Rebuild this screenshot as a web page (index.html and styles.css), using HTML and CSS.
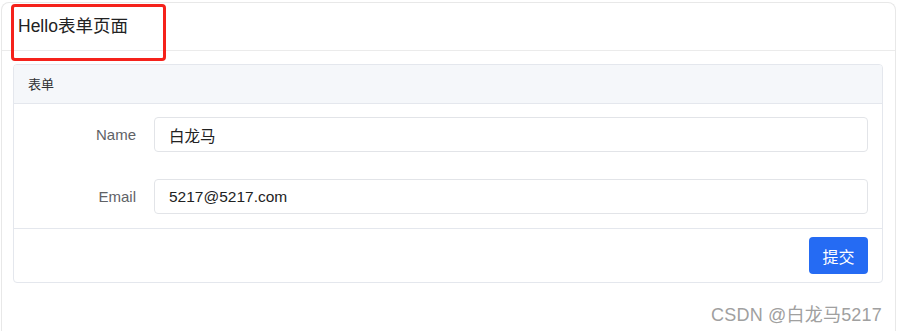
FILE: index.html
```html
<!DOCTYPE html>
<html lang="zh-CN">
<head>
<meta charset="utf-8">
<title>Hello表单页面</title>
<link rel="stylesheet" href="styles.css">
</head>
<body>
<div class="page">
  <div class="card">
    <div class="card-header">Hello表单页面</div>
    <div class="card-body">
      <div class="panel">
        <div class="panel-header">表单</div>
        <div class="panel-body">
          <div class="form">
            <label class="label">Name</label>
            <div class="input">白龙马</div>
            <label class="label">Email</label>
            <div class="input">5217@5217.com</div>
          </div>
        </div>
        <div class="panel-footer">
          <button class="btn">提交</button>
        </div>
      </div>
    </div>
  </div>
  <div class="annot"></div>
  <div class="watermark">CSDN @白龙马5217</div>
</div>
</body>
</html>
```
FILE: styles.css
```css
* { box-sizing: border-box; }
html, body { margin: 0; padding: 0; background: #fff; }
body {
  font-family: "Liberation Sans", "Noto Sans CJK SC", Arial, sans-serif;
  color: #303133;
  overflow: hidden;
  height: 331px;
}
.page { position: relative; width: 897px; height: 331px; overflow: hidden; }
.card {
  margin: 2px 0 0 1px;
  width: 895px;
  height: 329px;
  border: 1px solid #e8e8e8;
  border-bottom: none;
  border-radius: 8px 8px 0 0;
  background: #fff;
}
.card-header {
  height: 48px;
  border-bottom: 1px solid #ebebeb;
  padding: 0 0 5px 16px;
  display: flex;
  align-items: center;
  font-size: 17.5px;
  color: #222;
}
.card-body { padding: 13px 12px 0 11px; }
.panel {
  width: 870px;
  border: 1px solid #e4e7ed;
  border-radius: 4px;
  overflow: hidden;
}
.panel-header {
  height: 39px;
  background: #f5f7fa;
  border-bottom: 1px solid #e4e7ed;
  padding: 0 14px 2px;
  display: flex;
  align-items: center;
  font-size: 13px;
  color: #303133;
}
.panel-body {
  padding: 13px 14px 14px 0;
  border-bottom: 1px solid #e4e7ed;
}
.form {
  display: grid;
  grid-template-columns: 140px 1fr;
  row-gap: 27px;
  align-items: center;
}
.label {
  text-align: right;
  padding-right: 18px;
  font-size: 15px;
  color: #606266;
}
.input {
  height: 35px;
  border: 1px solid #e2e4e8;
  border-radius: 4px;
  padding: 0 14px;
  display: flex;
  align-items: center;
  font-size: 15.5px;
  color: #222;
}
.panel-footer {
  height: 53px;
  padding: 0 14px;
  display: flex;
  align-items: center;
  justify-content: flex-end;
}
.btn {
  width: 59px;
  height: 37px;
  border: none;
  border-radius: 4px;
  background: #256bf3;
  color: #fff;
  font-family: "Liberation Sans", "Noto Sans CJK SC", sans-serif;
  font-size: 16px;
  padding: 0;
}
.annot {
  position: absolute;
  left: 11px;
  top: 4px;
  width: 155px;
  height: 57px;
  border: 3px solid #f5221b;
  border-radius: 4px;
}
.watermark {
  position: absolute;
  right: 15px;
  top: 300px;
  font-size: 18px;
  color: #a0a0a0;
  letter-spacing: 0.2px;
}
```
